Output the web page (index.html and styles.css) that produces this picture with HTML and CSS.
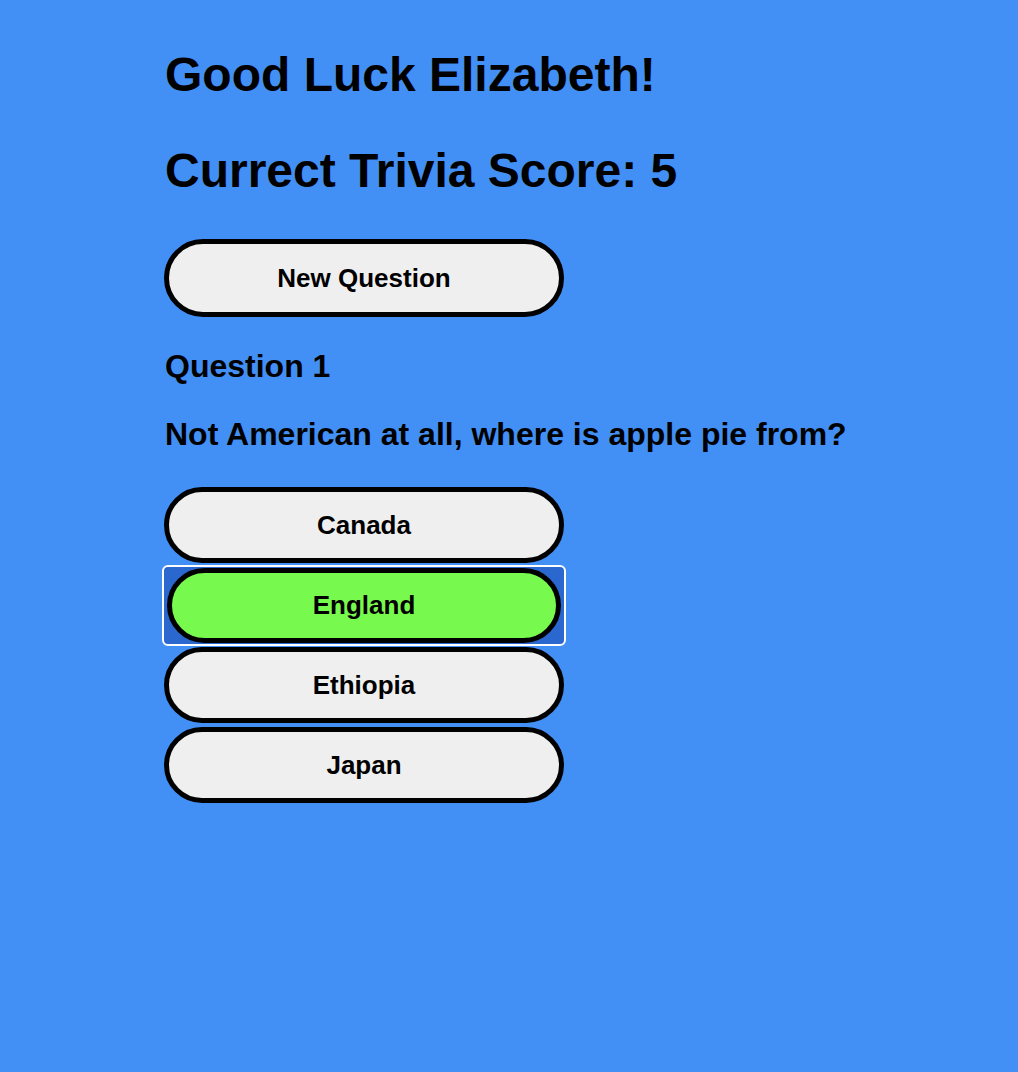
FILE: index.html
```html
<!DOCTYPE html>
<html lang="en">
<head>
<meta charset="utf-8">
<title>Trivia</title>
<link rel="stylesheet" href="styles.css">
</head>
<body>
<main class="page">
  <h1 class="title">Good Luck Elizabeth!</h1>
  <h1 class="title title-score">Currect Trivia Score: 5</h1>
  <button class="pill pill-new" type="button">New Question</button>
  <h3 class="q-label">Question 1</h3>
  <h3 class="q-text">Not American at all, where is apple pie from?</h3>
  <div class="answers">
    <button class="pill answer" type="button">Canada</button>
    <div class="focus-ring">
      <button class="pill answer answer-correct" type="button">England</button>
    </div>
    <button class="pill answer" type="button">Ethiopia</button>
    <button class="pill answer" type="button">Japan</button>
  </div>
</main>
</body>
</html>
```

FILE: styles.css
```css
html, body {
  margin: 0;
  padding: 0;
}

body {
  background: #428ff6;
  min-height: 100vh;
  font-family: "Liberation Sans", Arial, Helvetica, sans-serif;
  color: #000;
}

.page {
  display: flex;
  flex-direction: column;
  align-items: flex-start;
  padding: 47px 0 0 164px;
}

.title {
  font-size: 48px;
  line-height: 56px;
  font-weight: bold;
  margin: 0 0 40px 1px;
}

.title-score {
  margin-bottom: 40px;
}

.pill {
  box-sizing: border-box;
  width: 400px;
  height: 76px;
  border: 5px solid #000;
  border-radius: 40px;
  background: #efefef;
  color: #000;
  font-family: "Liberation Sans", Arial, Helvetica, sans-serif;
  font-size: 26px;
  font-weight: bold;
  padding: 0;
  margin: 0;
  display: flex;
  align-items: center;
  justify-content: center;
}

.pill-new {
  height: 78px;
}

.q-label,
.q-text {
  font-size: 32px;
  line-height: 37px;
  font-weight: bold;
  margin: 0 0 0 1px;
}

.q-label {
  margin-top: 31px;
  margin-bottom: 31px;
}

.q-text {
  margin-bottom: 34px;
}

.answers {
  display: flex;
  flex-direction: column;
  gap: 4px;
}

.focus-ring {
  box-sizing: border-box;
  width: 404px;
  height: 81px;
  margin: -2px -2px -3px -2px;
  border: 2px solid #fff;
  border-radius: 6px;
  background: #2a67cf;
  display: flex;
  align-items: center;
  justify-content: center;
}

.answer-correct {
  width: 394px;
  height: 75px;
  background: #77fa4d;
}
```
